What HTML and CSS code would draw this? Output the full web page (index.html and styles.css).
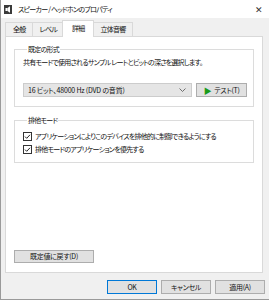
FILE: index.html
```html
<!DOCTYPE html>
<html lang="ja">
<head>
    <meta charset="UTF-8">
    <title>スピーカー / ヘッドホンのプロパティ</title>
    <link rel="stylesheet" href="styles.css">
</head>
<body>
    <div class="window">
        <!-- Title Bar -->
        <div class="titlebar">
            <svg class="title-icon" width="8" height="9" viewBox="0 0 8 9">
                <rect x="0" y="0" width="8" height="9" fill="#3a3a3a"/>
                <rect x="1.5" y="3" width="2" height="3" fill="#fff"/>
                <path d="M3.5 3 L6 1.2 V7.8 L3.5 6 Z" fill="#fff"/>
            </svg>
            <span class="title-text">スピーカー / ヘッドホンのプロパティ</span>
            <span class="close">✕</span>
        </div>

        <!-- Tabs -->
        <div class="tabs">
            <div class="tab">全般</div>
            <div class="tab">レベル</div>
            <div class="tab active">詳細</div>
            <div class="tab">立体音響</div>
        </div>

        <!-- Tab Panel -->
        <div class="panel">
            <fieldset class="group group-format">
                <legend>既定の形式</legend>
                <p class="desc">共有モードで使用されるサンプル レートとビットの深さを選択します。</p>
                <div class="format-row">
                    <div class="select">
                        <span>16 ビット、48000 Hz (DVD の音質)</span>
                        <svg class="chevron" width="7" height="4" viewBox="0 0 7 4">
                            <path d="M0.5 0.5 L3.5 3.5 L6.5 0.5" fill="none" stroke="#606060" stroke-width="0.9"/>
                        </svg>
                    </div>
                    <button class="btn test-btn"><span class="play">▶</span>テスト(T)</button>
                </div>
            </fieldset>

            <fieldset class="group group-exclusive">
                <legend>排他モード</legend>
                <label class="check">
                    <svg class="box" width="9" height="9" viewBox="0 0 9 9">
                        <rect x="0.5" y="0.5" width="8" height="8" fill="#fff" stroke="#333"/>
                        <path d="M2 4.6 L3.7 6.3 L7 2.8" fill="none" stroke="#222" stroke-width="1"/>
                    </svg>
                    アプリケーションによりこのデバイスを排他的に制御できるようにする
                </label>
                <label class="check">
                    <svg class="box" width="9" height="9" viewBox="0 0 9 9">
                        <rect x="0.5" y="0.5" width="8" height="8" fill="#fff" stroke="#333"/>
                        <path d="M2 4.6 L3.7 6.3 L7 2.8" fill="none" stroke="#222" stroke-width="1"/>
                    </svg>
                    排他モードのアプリケーションを優先する
                </label>
            </fieldset>

            <button class="btn reset-btn">既定値に戻す(D)</button>
        </div>

        <!-- Dialog Buttons -->
        <div class="dialog-buttons">
            <button class="btn dlg-btn ok-btn">OK</button>
            <button class="btn dlg-btn">キャンセル</button>
            <button class="btn dlg-btn">適用(A)</button>
        </div>
    </div>
</body>
</html>
```

FILE: styles.css
```css
* {
    box-sizing: border-box;
    margin: 0;
    padding: 0;
}

body {
    width: 269px;
    height: 300px;
    overflow: hidden;
    font-family: "Noto Sans CJK JP", "Noto Sans", sans-serif;
    font-size: 7px;
    line-height: 11px;
    letter-spacing: -0.75px;
    font-feature-settings: "palt";
    color: #111;
}

.window {
    height: 300px;
    display: flex;
    flex-direction: column;
    background-color: #f0f0f0;
    border-left: 1px solid #9a9a9a;
    border-bottom: 1px solid #9a9a9a;
}

/* Title Bar */
.titlebar {
    height: 18px;
    flex-shrink: 0;
    display: flex;
    align-items: center;
    background-color: #fff;
    padding: 0 6px 0 3px;
}

.title-icon {
    display: block;
}

.title-text {
    margin-left: 6px;
    flex: 1;
}

.close {
    font-size: 9px;
    letter-spacing: 0;
    color: #333;
}

/* Tabs */
.tabs {
    height: 18px;
    flex-shrink: 0;
    display: flex;
    align-items: flex-end;
    padding-left: 4px;
}

.tab {
    height: 14px;
    padding: 0 6px 0 7px;
    display: flex;
    align-items: center;
    border: 1px solid #d9d9d9;
    border-bottom: none;
    margin-right: -1px;
    background-color: #f0f0f0;
}

.tab.active {
    height: 17px;
    margin: 0 -1px -1px -1px;
    padding: 0 8px 2px 9px;
    background-color: #fff;
    position: relative;
    z-index: 1;
}

/* Panel */
.panel {
    height: 237px;
    flex-shrink: 0;
    margin: 0 6px 0 4px;
    background-color: #fff;
    border: 1px solid #d9d9d9;
    padding: 7px 8px 9px;
    display: flex;
    flex-direction: column;
}

.group {
    border: 1px solid #dcdcdc;
    min-width: 0;
}

.group legend {
    margin-left: 4px;
    padding: 0 1px;
}

.group-format {
    padding: 2px 6px 9px 8px;
}

.desc {
    white-space: nowrap;
}

.format-row {
    display: flex;
    margin-top: 15px;
    gap: 4px;
}

.select {
    width: 170px;
    height: 14px;
    display: flex;
    align-items: center;
    justify-content: space-between;
    padding: 0 5px 0 4px;
    background-color: #e5e5e5;
    border: 1px solid #cccccc;
    letter-spacing: -0.2px;
}

.btn {
    font: inherit;
    letter-spacing: -0.3px;
    font-feature-settings: "palt";
    color: #111;
    background-color: #e1e1e1;
    border: 1px solid #adadad;
    display: flex;
    align-items: center;
    justify-content: center;
}

.test-btn {
    width: 51px;
    height: 14px;
}

.play {
    color: #1a9a1a;
    font-size: 8px;
    margin-right: 3px;
}

.group-exclusive {
    margin-top: 8px;
    padding: 4px 6px 6px 8px;
}

.check {
    display: flex;
    align-items: center;
    height: 13px;
    white-space: nowrap;
}

.box {
    display: block;
    flex-shrink: 0;
    margin-right: 3px;
}

.reset-btn {
    margin-top: auto;
    width: 80px;
    height: 13px;
}

/* Dialog Buttons */
.dialog-buttons {
    display: flex;
    justify-content: flex-end;
    gap: 4px;
    padding: 7px 4px 0 0;
}

.dlg-btn {
    width: 50px;
    height: 14px;
}

.ok-btn {
    border-color: #0078d7;
}
```
